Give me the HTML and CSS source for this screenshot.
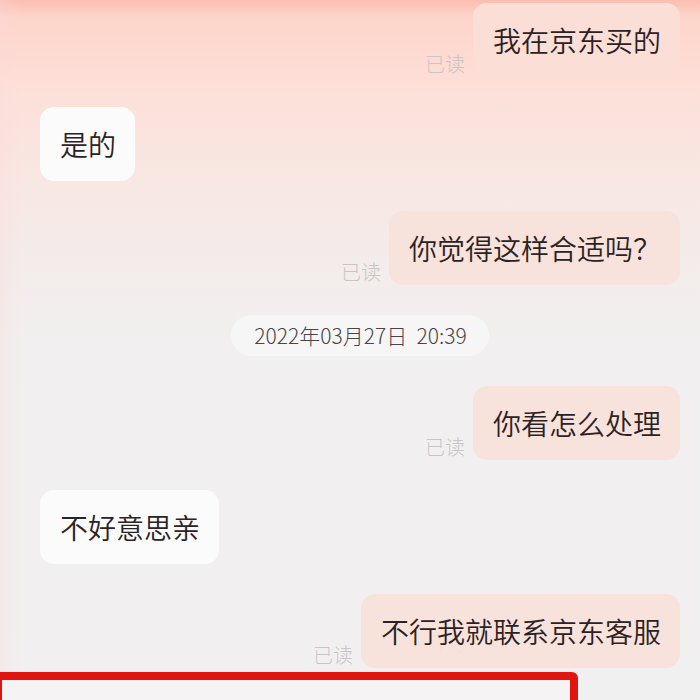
FILE: index.html
```html
<!DOCTYPE html>
<html lang="zh-CN">
<head>
  <meta charset="UTF-8">
  <title>聊天记录</title>
  <link rel="stylesheet" href="styles.css">
</head>
<body>

<div class="chat">
  <div class="row mine">
    <span class="read">已读</span>
    <div class="bubble">我在京东买的</div>
  </div>

  <div class="row theirs">
    <div class="bubble">是的</div>
  </div>

  <div class="row mine">
    <span class="read">已读</span>
    <div class="bubble">你觉得这样合适吗？</div>
  </div>

  <div class="time">
    <span>2022年03月27日&nbsp; 20:39</span>
  </div>

  <div class="row mine">
    <span class="read">已读</span>
    <div class="bubble">你看怎么处理</div>
  </div>

  <div class="row theirs">
    <div class="bubble">不好意思亲</div>
  </div>

  <div class="row mine">
    <span class="read">已读</span>
    <div class="bubble">不行我就联系京东客服</div>
  </div>

  <div class="marked"></div>
</div>

</body>
</html>
```

FILE: styles.css
```css
html, body {
  margin: 0;
  height: 100%;
}
body {
  font-family: "Noto Sans CJK SC", "Noto Sans", sans-serif;
  color: #2b2224;
  overflow: hidden;
  background:
    linear-gradient(to right, rgba(250, 218, 218, 0.3) 0, rgba(250, 218, 218, 0) 22px),
    linear-gradient(to bottom, #fbbfb2 0, #fcc8bc 8px, #fdd4ca 16px, #fde0d9 90px, #f8e7e3 180px, #f3ecea 260px, #f1efef 340px, #f1f0f0 700px);
}
.chat {
  display: flex;
  flex-direction: column;
  gap: 30px;
  padding-top: 3px;
}
.row {
  display: flex;
  align-items: flex-end;
  gap: 8px;
}
.mine {
  justify-content: flex-end;
  padding-right: 20px;
}
.theirs {
  padding-left: 40px;
}
.bubble {
  font-size: 28px;
  font-weight: 350;
  line-height: 34px;
  padding: 20px 19px 20px 20px;
  border-radius: 14px;
  white-space: nowrap;
}
.mine .bubble {
  background: #f8e2dc;
}
.mine:first-child .bubble {
  background: #fbded6;
}
.theirs .bubble {
  background: #fbfbfc;
}
.read {
  font-size: 20px;
  font-weight: 300;
  line-height: 26px;
  color: #c9c5c5;
}
.time {
  display: flex;
  justify-content: center;
  padding-left: 20px;
}
.time span {
  background: #f7f6f7;
  border-radius: 21px;
  font-size: 21px;
  font-weight: 300;
  line-height: 41px;
  padding: 0 22px 0 23px;
  color: #4a4448;
}
.marked {
  margin-top: -26px;
  width: 568px;
  height: 60px;
  border: 8px solid #e0150f;
  border-left-width: 2px;
  border-radius: 0 6px 0 0;
  background: #f5f3f3;
}
```
